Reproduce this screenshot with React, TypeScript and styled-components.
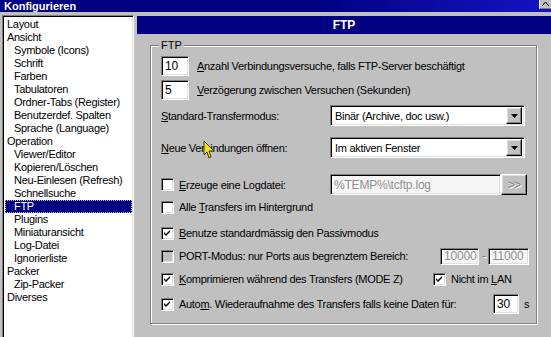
import React from "react";
import styled, { createGlobalStyle } from "styled-components";

const GlobalStyle = createGlobalStyle`
  html, body {
    margin: 0;
    padding: 0;
    background: #c0c0c0;
  }
  body {
    font-family: "Liberation Sans", Arial, sans-serif;
    font-size: 11px;
    color: #000;
  }
`;

const Window = styled.div`
  position: relative;
  width: 551px;
  height: 337px;
  overflow: hidden;
  background: #c0c0c0;
  display: flex;
  flex-direction: column;
`;

const TitleBar = styled.div`
  height: 18px;
  display: flex;
  align-items: center;
  justify-content: space-between;
  padding-left: 4px;
  background: linear-gradient(to right, #000080 55%, #1414c4);
  color: #fff;
  font-weight: bold;
  font-size: 11px;
`;

const TitleButton = styled.div`
  width: 11px;
  height: 8px;
  align-self: flex-start;
  background: #c0c0c0;
  border-left: 1px solid #fff;
  border-bottom: 1px solid #808080;
  display: flex;
  align-items: center;
  justify-content: center;
`;

const Body = styled.div`
  display: flex;
  flex: 1;
  margin-top: 3px;
  padding-left: 2px;
  gap: 3px;
`;

const TreePanel = styled.div`
  width: 132px;
  box-sizing: border-box;
  height: 330px;
  background: #fff;
  border: 1px solid;
  border-color: #808080 #fff #fff #808080;
  box-shadow: inset 1px 1px #000, inset -1px -1px #dfdfdf;
  padding: 2px 1px 0 2px;
`;

const TreeItem = styled.div<{ $level: number; $selected?: boolean }>`
  height: 13px;
  line-height: 13px;
  font-size: 11px;
  letter-spacing: -0.3px;
  padding-left: ${(p) => (p.$level ? 9 : 2)}px;
  white-space: nowrap;
  background: ${(p) => (p.$selected ? "#000080" : "transparent")};
  color: ${(p) => (p.$selected ? "#fff" : "#000")};
  outline: ${(p) => (p.$selected ? "1px dotted #c0c0c0" : "none")};
  outline-offset: -1px;
`;

const RightPane = styled.div`
  flex: 1;
  display: flex;
  flex-direction: column;
  padding-top: 1px;
`;

const PageHeader = styled.div`
  height: 18px;
  background: #000080;
  color: #fff;
  font-weight: bold;
  font-size: 12px;
  display: flex;
  align-items: center;
  justify-content: center;
`;

const GroupBox = styled.div`
  position: relative;
  margin: 11px 0 0 13px;
  width: 387px;
  height: 279px;
  box-sizing: border-box;
  border: 1px solid #808080;
  box-shadow: inset 1px 1px #fff, 1px 1px #fff;
  padding: 1px 0 0 10px;
  display: flex;
  flex-direction: column;
`;

const GroupLabel = styled.span`
  position: absolute;
  top: -7px;
  left: 8px;
  padding: 0 2px;
  background: #c0c0c0;
  font-size: 11px;
  line-height: 13px;
`;

const Row = styled.div<{ $mt: number; $h: number }>`
  display: flex;
  align-items: center;
  margin-top: ${(p) => p.$mt}px;
  height: ${(p) => p.$h}px;
  white-space: nowrap;
  font-size: 11px;
  letter-spacing: -0.3px;
`;

const Cell = styled.div<{ $w: number }>`
  width: ${(p) => p.$w}px;
  flex: none;
  display: flex;
  align-items: center;
`;

const Edit = styled.div<{ $w: number; $h?: number; $disabled?: boolean; $ml?: number }>`
  width: ${(p) => p.$w}px;
  height: ${(p) => p.$h ?? 20}px;
  margin-left: ${(p) => p.$ml ?? 0}px;
  box-sizing: border-box;
  flex: none;
  overflow: hidden;
  background: ${(p) => (p.$disabled ? "#f6f6f6" : "#fff")};
  color: ${(p) => (p.$disabled ? "#909090" : "#000")};
  border: 1px solid;
  border-color: #808080 #fff #fff #808080;
  box-shadow: inset 1px 1px #000, inset -1px -1px #dfdfdf;
  padding-left: 3px;
  display: flex;
  align-items: center;
  font-size: 12px;
  letter-spacing: -0.2px;
`;

const Label = styled.span<{ $ml?: number }>`
  margin-left: ${(p) => p.$ml ?? 0}px;
`;

const Select = styled.div`
  width: 195px;
  height: 21px;
  box-sizing: border-box;
  background: #fff;
  border: 1px solid;
  border-color: #808080 #fff #fff #808080;
  box-shadow: inset 1px 1px #000, inset -1px -1px #dfdfdf;
  display: flex;
  align-items: center;
  justify-content: space-between;
  padding: 0 2px 0 4px;
  font-size: 11px;
`;

const Button = styled.div<{ $w: number; $h: number }>`
  width: ${(p) => p.$w}px;
  height: ${(p) => p.$h}px;
  box-sizing: border-box;
  flex: none;
  background: #c0c0c0;
  border: 1px solid;
  border-color: #fff #000 #000 #fff;
  box-shadow: inset -1px -1px #808080, inset 1px 1px #dfdfdf;
  display: flex;
  align-items: center;
  justify-content: center;
`;

const DisabledGlyph = styled.span`
  color: #808080;
  text-shadow: 1px 1px #fff;
  font-size: 12px;
  letter-spacing: -1px;
`;

const Check = styled.div<{ $disabled?: boolean }>`
  width: 13px;
  height: 13px;
  box-sizing: border-box;
  flex: none;
  background: ${(p) => (p.$disabled ? "#c0c0c0" : "#fff")};
  border: 1px solid;
  border-color: #808080 #fff #fff #808080;
  box-shadow: inset 1px 1px #000, inset -1px -1px #dfdfdf;
  display: flex;
  align-items: center;
  justify-content: center;
`;

const U = styled.u`
  text-decoration: underline;
  text-underline-offset: 1px;
`;

const Cursor = styled.svg`
  position: absolute;
  left: 203px;
  top: 140px;
`;

const CheckMark = () => (
  <svg width="7" height="7" viewBox="0 0 7 7">
    <path d="M0 2 L2 4 L6 0 L6 2 L2 6 L0 4 Z" fill="#000" />
  </svg>
);

const DownArrow = () => (
  <svg width="7" height="4" viewBox="0 0 7 4">
    <path d="M0 0 H7 L3.5 4 Z" fill="#000" />
  </svg>
);

const CheckBox: React.FC<{ checked?: boolean; disabled?: boolean }> = ({ checked, disabled }) => (
  <Check $disabled={disabled}>{checked && <CheckMark />}</Check>
);

const Combo: React.FC<{ value: string }> = ({ value }) => (
  <Select>
    <span>{value}</span>
    <Button $w={16} $h={17}>
      <DownArrow />
    </Button>
  </Select>
);

const treeItems: Array<[string, number]> = [
  ["Layout", 0],
  ["Ansicht", 0],
  ["Symbole (Icons)", 1],
  ["Schrift", 1],
  ["Farben", 1],
  ["Tabulatoren", 1],
  ["Ordner-Tabs (Register)", 1],
  ["Benutzerdef. Spalten", 1],
  ["Sprache (Language)", 1],
  ["Operation", 0],
  ["Viewer/Editor", 1],
  ["Kopieren/Löschen", 1],
  ["Neu-Einlesen (Refresh)", 1],
  ["Schnellsuche", 1],
  ["FTP", 1],
  ["Plugins", 1],
  ["Miniaturansicht", 1],
  ["Log-Datei", 1],
  ["Ignorierliste", 1],
  ["Packer", 0],
  ["Zip-Packer", 1],
  ["Diverses", 0],
];

const App: React.FC = () => {
  return (
    <Window>
      <GlobalStyle />
      <TitleBar>
        <span>Konfigurieren</span>
        <TitleButton>
          <svg width="7" height="4" viewBox="0 0 7 4">
            <path d="M0 4 L3.5 0 L7 4" fill="none" stroke="#000" strokeWidth="1" />
          </svg>
        </TitleButton>
      </TitleBar>
      <Body>
        <TreePanel>
          {treeItems.map(([name, level]) => (
            <TreeItem key={name} $level={level} $selected={name === "FTP"}>
              {name}
            </TreeItem>
          ))}
        </TreePanel>
        <RightPane>
          <PageHeader>FTP</PageHeader>
          <GroupBox>
            <GroupLabel>FTP</GroupLabel>
            <Row $mt={9} $h={20}>
              <Edit $w={28}>10</Edit>
              <Label $ml={8}>
                <U>A</U>nzahl Verbindungsversuche, falls FTP-Server beschäftigt
              </Label>
            </Row>
            <Row $mt={4} $h={20}>
              <Edit $w={28}>5</Edit>
              <Label $ml={8}>
                <U>V</U>erzögerung zwischen Versuchen (Sekunden)
              </Label>
            </Row>
            <Row $mt={5} $h={21}>
              <Cell $w={169}>
                <span>
                  <U>S</U>tandard-Transfermodus:
                </span>
              </Cell>
              <Combo value="Binär (Archive, doc usw.)" />
            </Row>
            <Row $mt={11} $h={21}>
              <Cell $w={169}>
                <span>
                  <U>N</U>eue Verbindungen öffnen:
                </span>
              </Cell>
              <Combo value="Im aktiven Fenster" />
            </Row>
            <Row $mt={16} $h={21}>
              <Cell $w={169}>
                <CheckBox />
                <Label $ml={5}>
                  <U>E</U>rzeuge eine Logdatei:
                </Label>
              </Cell>
              <Edit $w={171} $h={21} $disabled>
                %TEMP%\tcftp.log
              </Edit>
              <Button $w={26} $h={21}>
                <DisabledGlyph>&gt;&gt;</DisabledGlyph>
              </Button>
            </Row>
            <Row $mt={4} $h={16}>
              <CheckBox />
              <Label $ml={5}>
                Alle <U>T</U>ransfers im Hintergrund
              </Label>
            </Row>
            <Row $mt={10} $h={16}>
              <CheckBox checked />
              <Label $ml={5}>
                <U>B</U>enutze standardmässig den Passivmodus
              </Label>
            </Row>
            <Row $mt={6} $h={18}>
              <Cell $w={279}>
                <CheckBox disabled />
                <Label $ml={5}>PORT-Modus: nur Ports aus begrenztem Bereich:</Label>
              </Cell>
              <Edit $w={39} $h={17} $disabled>
                10000
              </Edit>
              <Label $ml={3}>
                <DisabledGlyph>-</DisabledGlyph>
              </Label>
              <Edit $w={41} $h={17} $ml={3} $disabled>
                11000
              </Edit>
            </Row>
            <Row $mt={6} $h={16}>
              <Cell $w={272}>
                <CheckBox checked />
                <Label $ml={5}>
                  <U>K</U>omprimieren während des Transfers (MODE Z)
                </Label>
              </Cell>
              <CheckBox checked />
              <Label $ml={5}>
                Nicht im <U>L</U>AN
              </Label>
            </Row>
            <Row $mt={7} $h={20}>
              <Cell $w={332}>
                <CheckBox checked />
                <Label $ml={5}>
                  Auto<U>m</U>. Wiederaufnahme des Transfers falls keine Daten für:
                </Label>
              </Cell>
              <Edit $w={26}>30</Edit>
              <Label $ml={5}>s</Label>
            </Row>
          </GroupBox>
        </RightPane>
      </Body>
      <Cursor width="13" height="20" viewBox="0 0 13 20">
        <path d="M1 1 L1 15 L4 12 L6 18 L8 17 L6 11 L11 11 Z" fill="#f0e020" stroke="#404000" strokeWidth="1" />
      </Cursor>
    </Window>
  );
};

export default App;
